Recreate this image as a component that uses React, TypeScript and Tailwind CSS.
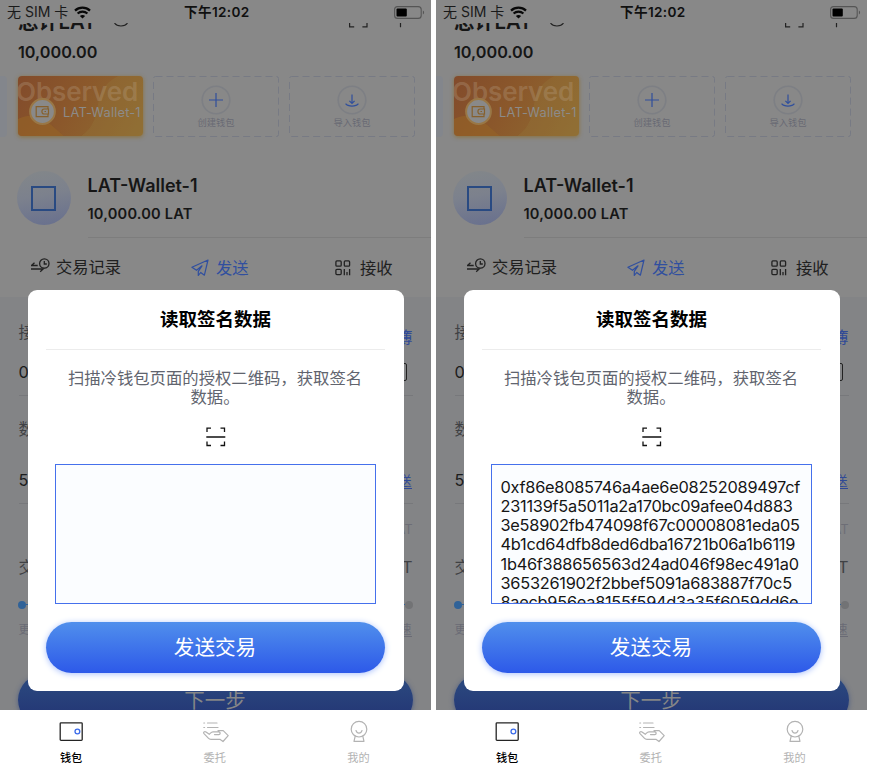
import type { ReactNode } from "react";

const SIGNED_LINES = [
  "0xf86e8085746a4ae6e08252089497cf",
  "231139f5a5011a2a170bc09afee04d883",
  "3e58902fb474098f67c00008081eda05",
  "4b1cd64dfb8ded6dba16721b06a1b6119",
  "1b46f388656563d24ad046f98ec491a0",
  "3653261902f2bbef5091a683887f70c5",
  "8aecb956ea8155f594d3a35f6059dd6e",
];

function StatusBar() {
  return (
    <div className="flex h-[23px] shrink-0 items-center pl-[7px] pr-[6.5px] pt-px text-[14px] leading-none text-[#1a1a1a]">
      <span className="w-[60px] whitespace-nowrap">无 SIM 卡</span>
      <svg className="ml-[7px]" width="17" height="13" viewBox="0 0 17 13" fill="none" stroke="#080808">
        <path d="M1 4.6C5.2 .7 11.8 .7 16 4.6" strokeWidth="2.3" />
        <path d="M3.6 7.5c2.8-2.5 7-2.5 9.8 0" strokeWidth="2.2" />
        <path d="M5.9 9.9 8.5 12.5l2.6-2.6c-1.4-1.3-3.8-1.3-5.2 0z" fill="#080808" stroke="none" />
      </svg>
      <span className="ml-[93px] mt-[2px] whitespace-nowrap text-[13.6px] font-semibold tracking-[0.35px] text-[#101010]">下午12:02</span>
      <svg className="ml-auto" width="31" height="13" viewBox="0 0 31 13">
        <rect x=".6" y=".6" width="26.6" height="11.8" rx="3" fill="none" stroke="#555" strokeWidth="1.1" />
        <rect x="2.5" y="2.4" width="10.3" height="8.2" rx="1" fill="#000" />
        <path d="M28.9 4.6v4c1.6-.7 1.6-3.3 0-4z" fill="#555" />
      </svg>
    </div>
  );
}

function HeaderRemnant() {
  return (
    <div className="flex h-[8px] shrink-0 items-end overflow-hidden pl-[18px] text-[#161616]">
      <span className="mb-[-3px] w-[96px] whitespace-nowrap text-[20.3px] font-semibold leading-[24px]">总计LAT</span>
      <svg width="14" height="8" viewBox="0 0 14 8" fill="none" stroke="#222" strokeWidth="1.1">
        <path d="M.5 0c2.6 3.9 10.4 3.9 13 0" />
      </svg>
      <svg className="ml-[221px]" width="56" height="8" viewBox="0 0 56 8" fill="none" stroke="#222" strokeWidth="1.2">
        <path d="M.6 0v3.8h4.6M18 0v3.8h-4.6M51.5 0v4.2" />
      </svg>
    </div>
  );
}

function AddCard({ label, children }: { label: string; children: ReactNode }) {
  return (
    <div className="relative flex h-[61px] w-[126px] shrink-0 flex-col items-center pt-[9px]">
      <svg className="absolute inset-0" width="126" height="61" fill="none">
        <rect x=".5" y=".5" width="125" height="60" rx="2" stroke="#777a84" strokeDasharray="7 4" />
      </svg>
      <svg width="30" height="30" viewBox="0 0 30 30" fill="none" stroke="#304f9c" strokeWidth="1.2">
        <circle cx="15" cy="15" r="13.8" stroke="#7d7f84" strokeWidth="1.6" />
        {children}
      </svg>
      <span className="mt-[3px] text-[9.3px] leading-[10px] text-[#686a74]">{label}</span>
    </div>
  );
}

function WalletCards() {
  return (
    <div className="flex h-[61px] shrink-0">
      <div className="mr-[11px] h-[61px] w-[7px] rounded-r bg-[#83868c]" />
      <div className="relative h-[60px] w-[125px] shrink-0 overflow-hidden rounded-[4px] bg-[linear-gradient(120deg,#824b2b_0%,#8b582b_45%,#8f6d32_100%)] shadow-[0_1px_4px_#8b713c]">
        <svg className="absolute inset-0" width="125" height="61">
          <path d="M125 0H100C68 17 91 41 62 61h63z" fill="#96773a" opacity=".3" />
          <path d="M0 43c21-10 31 5 47 18H0z" fill="#966426" opacity=".6" />
        </svg>
        <div className="relative -ml-[2px] h-[26px] whitespace-nowrap text-[26px] font-semibold leading-[31px] tracking-[-0.1px] text-[#bba68c]/30">Observed</div>
        <div className="relative -mt-[4px] ml-[11px] flex items-center">
          <svg width="27" height="27" viewBox="0 0 27 27" fill="none">
            <circle cx="13.5" cy="13.5" r="12.4" fill="#898989" stroke="#997746" strokeWidth="2" />
            <g stroke="#86602d" strokeWidth="1.2">
              <path d="M19 11V8.7H7.2v9.9H19V16" />
              <path d="M19.5 11h-4.4c-2.9 0-2.9 5 0 5h4.4z" />
              <path d="M15.5 13.5h1.5" />
            </g>
          </svg>
          <span className="ml-[7px] mt-[4px] whitespace-nowrap text-[12.8px] leading-none tracking-[0.2px] text-[#8c8b89]">LAT-Wallet-1</span>
        </div>
      </div>
      <div className="ml-[10px] flex gap-[10px]">
        <AddCard label="创建钱包">
          <path d="M15 8v14M8 15h14" />
        </AddCard>
        <AddCard label="导入钱包">
          <path d="M15 9.5v9M12.4 15.9l2.6 2.6 2.6-2.6M8.6 18.7c2.4 3.2 10.4 3.2 12.8 0" />
        </AddCard>
      </div>
    </div>
  );
}

function WalletSummary() {
  return (
    <div className="mt-[28px] flex h-[73px] shrink-0 pl-[17px]">
      <div className="mt-[6px] flex size-[54px] items-center justify-center rounded-full bg-[linear-gradient(170deg,#838789_0%,#7c818d_45%,#676f8e_100%)] pr-[1px]">
        <div className="size-[25px] border-2 border-[#294a82]" />
      </div>
      <div className="ml-[16.5px] flex-1 border-b border-[#7d7d7d] text-[#161616]">
        <div className="mt-[8px] text-[18px] font-semibold leading-[26px]">LAT-Wallet-1</div>
        <div className="mt-[2px] text-[14.6px] font-semibold leading-[26px] tracking-[0.2px]">10,000.00 LAT</div>
      </div>
    </div>
  );
}

function ActionTabs() {
  return (
    <div className="flex h-[59px] shrink-0 items-center text-[16.3px] leading-none text-[#202020]">
      <svg className="ml-[31px] mt-[-4px]" width="20" height="16" viewBox="0 0 20 16" fill="none" stroke="#222" strokeWidth="1.3">
        <circle cx="13.3" cy="5.5" r="4.7" />
        <path d="M13.3 3v3h2.5M6.7 7.5H.5l3-2.8M0 11h12.2l-3 2.8" />
      </svg>
      <span className="ml-[5px] w-[66px] whitespace-nowrap">交易记录</span>
      <svg className="ml-[69px]" width="18" height="18" viewBox="0 0 18 18" fill="none" stroke="#304f9f" strokeWidth="1.2" strokeLinejoin="round">
        <path d="M17 1 .9 8.2l4.6 3.1L11 6.8l-3.7 5.5v4.2l2.4-3 3.7 2.7z" />
      </svg>
      <span className="ml-[7px] mt-[2px] w-[34px] text-[#304f9f]">发送</span>
      <svg className="ml-[85px]" width="16" height="16" viewBox="0 0 16 16" fill="none" stroke="#222" strokeWidth="1.3">
        <rect x=".9" y=".9" width="5.3" height="5.3" rx="1" />
        <rect x="9.3" y=".9" width="5.3" height="5.3" rx="1" />
        <rect x=".9" y="9.3" width="5.3" height="5.3" rx="1" />
        <path d="M9.3 9v6.2M12 12v3.2M14.6 9v6.2" />
      </svg>
      <span className="ml-[9px] mt-[2px]">接收</span>
    </div>
  );
}

function TransferForm() {
  return (
    <div className="flex min-h-0 flex-1 flex-col overflow-hidden bg-[#838486] px-[18.5px] text-[16.3px] text-[#404144]">
      <div className="mt-[25px] flex h-[20px] shrink-0 items-center justify-between leading-none">
        <span>接</span>
        <span className="mt-[10px] text-[#304996]">簿</span>
      </div>
      <div className="mt-[10px] flex h-[44px] shrink-0 items-center justify-between border-b border-[#77787b] pb-[3px] text-[#1c1c1c]">
        <span>0</span>
        <span className="mr-[6px] h-[18px] w-[18px] rounded-[2px] border-[1.5px] border-[#222]" />
      </div>
      <div className="mt-[23px] h-[20px] shrink-0 leading-[20px]">数</div>
      <div className="mt-[19px] flex h-[46px] shrink-0 items-center justify-between border-b border-[#77787b] text-[#1c1c1c]">
        <span>5</span>
        <span className="mr-[1px] border-b border-[#304996] text-[13px] leading-[15px] text-[#304996]">送</span>
      </div>
      <div className="mt-[16px] h-[20px] shrink-0 text-right text-[12.5px] leading-[20px] text-[#6d6e76]">AT</div>
      <div className="mt-[17px] flex h-[20px] shrink-0 items-center justify-between leading-none">
        <span>交</span>
        <span>T</span>
      </div>
      <div className="-mx-[0.5px] mt-[23px] flex h-[9px] shrink-0 items-center">
        <span className="size-[8px] rounded-full bg-[#306298]" />
        <span className="h-px flex-1 bg-[#306298]" />
        <span className="size-[8px] rounded-full bg-[#727375]" />
      </div>
      <div className="mt-[12px] flex h-[18px] shrink-0 items-center justify-between text-[12px] leading-none text-[#6a6b75]">
        <span>更</span>
        <span className="mr-px border-b border-[#6a6b75]">速</span>
      </div>
      <div className="-mx-[0.5px] mt-[35px] flex h-[52px] shrink-0 justify-center rounded-full bg-[linear-gradient(#2c4c80,#223273)] pr-[1px] pt-[14px] text-[20.5px] leading-[26px] text-[#858687] shadow-[0_1px_5px_#4c5c83]">
        下一步
      </div>
    </div>
  );
}

function SignatureDialog({ lines }: { lines: string[] }) {
  return (
    <div className="absolute left-[27.5px] top-[290px] flex h-[401px] w-[376px] flex-col rounded-[9px] bg-white px-[18.5px]">
      <div className="h-[60px] border-b border-[#ececec] text-center text-[18.5px] font-semibold leading-[58px] text-black">读取签名数据</div>
      <div className="ml-[-1px] mt-[19px] text-center text-[16.35px] leading-[19.3px] text-[#61646e]">
        <div className="whitespace-nowrap">扫描冷钱包页面的授权二维码，获取签名</div>
        <div>数据。</div>
      </div>
      <svg className="ml-[159.5px] mt-[19px] shrink-0" width="20" height="20" viewBox="0 0 20 20" fill="none" stroke="#111" strokeWidth="1.3">
        <path d="M1 5V1.2h4M14.5 1.2h4V5M18.5 14.5v4h-4M5 18.5H1v-4M.3 10h19" />
      </svg>
      <div className="mx-auto mt-[17px] h-[140px] w-[321px] shrink-0 overflow-hidden border border-[#4570ec] bg-[#fbfdff] pl-[8.5px] pt-[13px] text-[16.35px] leading-[19.25px] tracking-[-0.26px] text-[#151515]">
        {lines.map((line) => (
          <div key={line} className="whitespace-nowrap">{line}</div>
        ))}
      </div>
      <div className="mt-[18.5px] flex h-[50.5px] shrink-0 items-center justify-center rounded-full bg-[linear-gradient(#508fec,#2d59e9)] pr-[1px] pt-[2px] text-[20.6px] leading-none text-white shadow-[0_1px_6px_#a9c0fb]">
        发送交易
      </div>
    </div>
  );
}

function TabItem({ label, active = false, children }: { label: string; active?: boolean; children: ReactNode }) {
  return (
    <div className={`flex flex-1 flex-col items-center pt-[10px] text-[11.2px] leading-[14px] ${active ? "font-medium text-black" : "text-[#b3b3b3]"}`}>
      {children}
      <span className="mt-[7px] pr-[1.5px]">{label}</span>
    </div>
  );
}

function TabBar() {
  return (
    <div className="flex h-[56px] shrink-0 bg-white">
      <TabItem label="钱包" active>
        <svg width="25" height="24" viewBox="0 0 25 24" fill="none">
          <rect x="1.2" y="2.8" width="22" height="17.5" rx=".8" stroke="#242424" strokeWidth="1.3" />
          <circle cx="18.4" cy="11.5" r="2.4" stroke="#3b6bea" strokeWidth="1.3" />
        </svg>
      </TabItem>
      <TabItem label="委托">
        <svg width="27" height="24" viewBox="0 0 27 24" fill="none" stroke="#b3b3b3" strokeWidth="1.2" strokeLinejoin="round" strokeLinecap="round">
          <path d="M1.8 3h.8M5.5 3H15M1.8 7.5h.8M5.5 7.5H16" />
          <path d="M12.5 14.6h4.3c1.8 0 1.8-2.7 0-2.7H11c-1.8 0-2.5 1.4-3.7 2.4L4 11.9c-1.4-1-3 .4-2 1.7l4.3 4.5c.8.9 1.5 1.2 2.6 1.2h9l3.1 2.2 5.2-5.9-5-5h-5.2" />
        </svg>
      </TabItem>
      <TabItem label="我的">
        <svg className="mr-[1px]" width="20" height="24" viewBox="0 0 20 24" fill="none" stroke="#b3b3b3" strokeWidth="1.2" strokeLinecap="round" strokeLinejoin="round">
          <circle cx="10" cy="9.2" r="7.8" />
          <path d="M7 10.5c1.1 3.5 4.9 3.5 6 0M6.2 16.2 5 21.3h10l-1.2-5.1" />
        </svg>
      </TabItem>
    </div>
  );
}

function Phone({ lines = [] }: { lines?: string[] }) {
  return (
    <section className="relative flex h-[766px] w-[431px] shrink-0 flex-col overflow-hidden bg-[#888888]">
      <StatusBar />
      <HeaderRemnant />
      <div className="mb-[12px] ml-[18px] mt-[9px] h-[24px] shrink-0 text-[16.2px] font-semibold leading-[24px] text-[#161616]">10,000.00</div>
      <WalletCards />
      <WalletSummary />
      <ActionTabs />
      <TransferForm />
      <TabBar />
      <SignatureDialog lines={lines} />
    </section>
  );
}

export default function App() {
  return (
    <main className="flex h-[766px] w-[874px] gap-[5px] overflow-hidden bg-white font-[Inter,'Noto_Sans_CJK_SC',sans-serif]">
      <Phone />
      <Phone lines={SIGNED_LINES} />
    </main>
  );
}
